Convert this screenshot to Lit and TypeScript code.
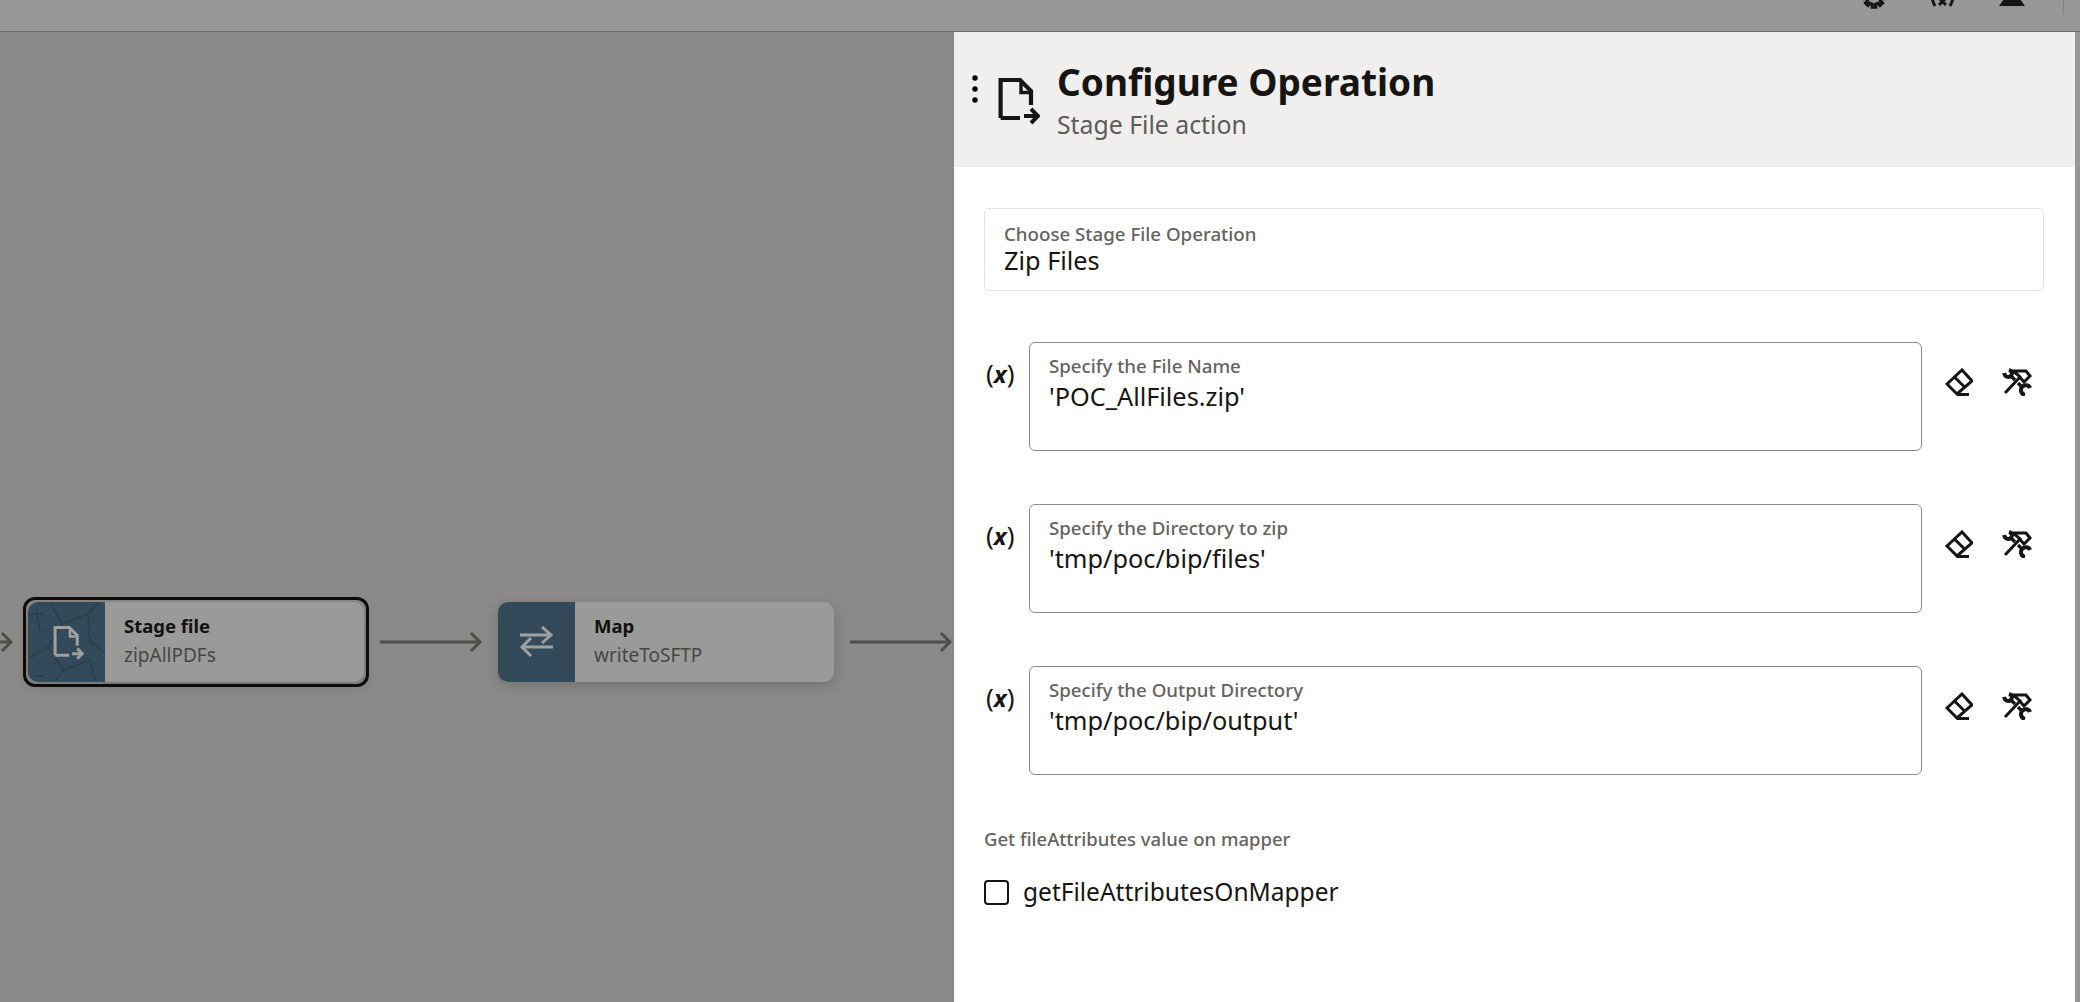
import { LitElement, html, css, svg } from "lit";
import { customElement } from "lit/decorators.js";

const docPaths = svg`<path d="M2.6 40V2H22L33 13V27M2.6 40H22" fill="none" stroke="currentColor" stroke-width="4.2"/><path d="M23 3V14.5H33" fill="none" stroke="currentColor" stroke-width="3.4"/><path d="M26 38H38M33 31L40 38L33 45" fill="none" stroke="currentColor" stroke-width="4"/>`;

const fields = [
  { label: "Specify the File Name", value: "'POC_AllFiles.zip'" },
  { label: "Specify the Directory to zip", value: "'tmp/poc/bip/files'" },
  { label: "Specify the Output Directory", value: "'tmp/poc/bip/output'" },
];

function gearPath(cx: number, cy: number, teeth: number, rOut: number, rIn: number) {
  const step = (Math.PI * 2) / teeth;
  const pts: string[] = [];
  for (let i = 0; i < teeth; i++) {
    const a = i * step + Math.PI / 2;
    const w = step * 0.22;
    const p = (r: number, t: number) => `${(cx + r * Math.cos(t)).toFixed(2)} ${(cy + r * Math.sin(t)).toFixed(2)}`;
    pts.push(p(rOut, a - w), p(rOut, a + w), p(rIn, a + step / 2 - w), p(rIn, a + step / 2 + w));
  }
  return `M${pts.join("L")}Z`;
}

@customElement("app-root")
export class AppRoot extends LitElement {
  static styles = css`
    :host {
      display: block;
      width: 2080px;
      height: 1002px;
      overflow: hidden;
      font-family: "Noto Sans", "Open Sans", sans-serif;
      color: #161513;
      background: #8a8987;
    }
    .page { display: flex; flex-direction: column; height: 1002px; }
    .topbar {
      height: 32px;
      flex: none;
      box-sizing: border-box;
      background: #989795;
      border-bottom: 1px solid #6f6e6b;
      display: flex;
      justify-content: flex-end;
      align-items: flex-start;
      overflow: hidden;
      padding-right: 16px;
    }
    .tb-icons { display: flex; align-items: flex-end; height: 9px; color: #161513; }
    .tb-icon { display: block; flex: none; }
    .gear { margin-right: 45px; }
    .xv { margin: 0 44px 2px 0; }
    .warn { margin: 0 38px 3px 0; }
    .tb-sep { width: 1px; height: 14px; background: #85847f; }
    .main { flex: 1; display: flex; min-height: 0; }
    .canvas {
      width: 954px;
      flex: none;
      display: flex;
      align-items: center;
      background: #8a8987;
      overflow: hidden;
    }
    .flow { display: flex; align-items: center; margin-top: 250px; margin-left: -7px; }
    .arrow { display: block; flex: none; color: #4f4d4a; }
    .arrow-0 { margin-right: 10px; }
    .arrow-1 { margin: 0 16px 0 11px; }
    .arrow-2 { margin-left: 16px; }
    .ring {
      border: 3px solid #0d0c0b;
      border-radius: 12px;
      padding: 2px;
      display: flex;
    }
    .node {
      width: 336px;
      height: 80px;
      display: flex;
      background: #9a9a99;
      border-radius: 10px;
      overflow: hidden;
      box-shadow: 0 4px 12px rgba(0, 0, 0, 0.16);
      flex: none;
    }
    .node-icon {
      position: relative;
      width: 77px;
      flex: none;
      background: #324a59;
      color: #a0a09f;
      display: flex;
      align-items: center;
      justify-content: center;
    }
    .cracks { position: absolute; inset: 0; }
    .node-icon svg.glyph { position: relative; display: block; }
    .doc-glyph { margin: 2px 0 0 3px; }
    .node-text { padding: 9px 0 0 19px; display: flex; flex-direction: column; }
    .node-title { font-size: 18.5px; font-weight: 700; line-height: 29px; color: #111; }
    .node-sub { font-size: 19px; line-height: 30px; color: #474645; }
    .drawer {
      width: 1121px;
      flex: none;
      background: #fff;
      display: flex;
      flex-direction: column;
    }
    .strip { flex: 1; background: #989795; }
    .head {
      height: 135px;
      flex: none;
      background: #f0efed;
      display: flex;
      align-items: flex-start;
      padding: 0 0 0 17px;
    }
    .kebab { margin: 42px 19px 0 0; flex: none; display: block; }
    .head-doc { margin: 46px 17px 0 0; flex: none; display: block; }
    .head-text { display: flex; flex-direction: column; padding-top: 24px; }
    .title { font-size: 37px; font-weight: 700; line-height: 52px; }
    .subtitle { font-size: 24.8px; line-height: 34px; color: #5d5c5a; margin-top: -1px; }
    .body { padding: 41px 31px 0 30px; display: flex; flex-direction: column; }
    .select {
      height: 83px;
      box-sizing: border-box;
      border: 1px solid #e4e3e1;
      border-radius: 5px;
      padding: 13px 19px 0;
      margin-bottom: 51px;
    }
    .select .fvalue { margin-top: -1px; }
    .flabel { font-size: 18.7px; line-height: 24px; color: #646361; font-weight: 500; }
    .fvalue { font-size: 25.3px; line-height: 30px; color: #161513; }
    .row { display: flex; align-items: flex-start; height: 109px; margin-bottom: 53px; }
    .vars { width: 45px; flex: none; padding: 15px 0 0 2px; box-sizing: border-box; font-size: 26px; line-height: 32px; }
    .vars i { font-weight: 700; font-size: 24px; }
    .input {
      width: 893px;
      height: 109px;
      flex: none;
      box-sizing: border-box;
      border: 1px solid #8c8b89;
      border-radius: 6px;
      padding: 11px 19px 0;
    }
    .input .fvalue { margin-top: 3px; }
    .tools { display: flex; align-items: flex-start; padding: 26px 0 0 23px; gap: 29px; }
    .tools svg { display: block; flex: none; }
    .group-label { font-size: 18.5px; line-height: 24px; color: #646361; font-weight: 500; margin-top: -1px; }
    .check { display: flex; align-items: center; margin-top: 25px; }
    .box { width: 25px; height: 25px; box-sizing: border-box; border: 2px solid #161513; border-radius: 4px; flex: none; margin-right: 14px; }
    .check-label { font-size: 24.5px; line-height: 32px; }
  `;

  private arrow(cls: string) {
    return html`<svg class="arrow ${cls}" width="102" height="26" viewBox="0 0 102 26"><path d="M0 13H100M91 4L100 13L91 22" fill="none" stroke="currentColor" stroke-width="3"/></svg>`;
  }

  private row(f: { label: string; value: string }) {
    return html`<div class="row">
      <div class="vars">(<i>x</i>)</div>
      <div class="input">
        <div class="flabel">${f.label}</div>
        <div class="fvalue">${f.value}</div>
      </div>
      <div class="tools">
        <svg width="28" height="28" viewBox="0 0 28 28"><path d="M2 16L17 2L27 13L12 26Z M9 8.5L20 19.5" fill="none" stroke="currentColor" stroke-width="3"/><path d="M12 26.5H24" stroke="currentColor" stroke-width="3"/></svg>
        <svg width="30" height="28" viewBox="0 0 30 28">
          <path d="M3 25L19 8" stroke="currentColor" stroke-width="3" fill="none"/>
          <path d="M11 3H24L28 8L22 14L16 7Z" fill="none" stroke="currentColor" stroke-width="3"/>
          <path d="M2 5C3 9 6 10 9 8M7 2C10 3 11 5 9 8" fill="none" stroke="currentColor" stroke-width="4"/>
          <path d="M9 8L13 12" stroke="currentColor" stroke-width="3.4"/>
          <path d="M16 15L20 19" stroke="currentColor" stroke-width="3.4"/>
          <path d="M28 20C27 17 23 16 20 19M23 27C19 26 18 22 20 19" fill="none" stroke="currentColor" stroke-width="4"/>
        </svg>
      </div>
    </div>`;
  }

  render() {
    return html`<div class="page">
      <div class="topbar">
        <div class="tb-icons">
          <svg class="tb-icon gear" width="22" height="24" viewBox="0 0 22 24"><path d=${gearPath(11, 12, 8, 10.5, 7.5)} fill="none" stroke="currentColor" stroke-width="3"/></svg>
          <svg class="tb-icon xv" width="25" height="24" viewBox="0 0 25 24"><path d="M5 1C1 8 1 16 5 23M20 1C24 8 24 16 20 23" fill="none" stroke="currentColor" stroke-width="3"/><path d="M9 15L16 22M16 15L9 22" stroke="currentColor" stroke-width="3"/></svg>
          <svg class="tb-icon warn" width="26" height="24" viewBox="0 0 26 24"><path d="M13 6L26 24H0Z" fill="currentColor"/></svg>
        </div>
        <div class="tb-sep"></div>
      </div>
      <div class="main">
        <div class="canvas">
          <div class="flow">
            <svg class="arrow arrow-0" width="20" height="26" viewBox="0 0 20 26"><path d="M0 13H18M9 4L18 13L9 22" fill="none" stroke="currentColor" stroke-width="3"/></svg>
            <div class="ring">
              <div class="node">
                <div class="node-icon">
                  <svg class="cracks" width="77" height="80" viewBox="0 0 77 80"><path d="M8 5L12 30M0 12H16M22 0L34 22L20 45L2 56M34 22L60 12L70 0M60 12L62 40L77 50M20 45L36 68L26 80M36 68L62 58L68 80M6 74H16" fill="none" stroke="#2b404e" stroke-width="1.6"/></svg>
                  <svg class="glyph doc-glyph" width="31" height="35" viewBox="0 0 42 48">${docPaths}</svg>
                </div>
                <div class="node-text">
                  <div class="node-title">Stage file</div>
                  <div class="node-sub">zipAllPDFs</div>
                </div>
              </div>
            </div>
            ${this.arrow("arrow-1")}
            <div class="node">
              <div class="node-icon">
                <svg class="glyph" width="34" height="32" viewBox="0 0 34 32"><path d="M0 9H31M22 1L31 9L22 17" fill="none" stroke="currentColor" stroke-width="3"/><path d="M33 21H2M11 12L2 21L11 30" fill="none" stroke="currentColor" stroke-width="3"/></svg>
              </div>
              <div class="node-text">
                <div class="node-title">Map</div>
                <div class="node-sub">writeToSFTP</div>
              </div>
            </div>
            ${this.arrow("arrow-2")}
          </div>
        </div>
        <div class="drawer">
          <div class="head">
            <svg class="kebab" width="8" height="30" viewBox="0 0 8 30"><circle cx="4" cy="4" r="2.7"/><circle cx="4" cy="15" r="2.7"/><circle cx="4" cy="26" r="2.7"/></svg>
            <svg class="head-doc" width="42" height="48" viewBox="0 0 42 48">${docPaths}</svg>
            <div class="head-text">
              <div class="title">Configure Operation</div>
              <div class="subtitle">Stage File action</div>
            </div>
          </div>
          <div class="body">
            <div class="select">
              <div class="flabel">Choose Stage File Operation</div>
              <div class="fvalue">Zip Files</div>
            </div>
            ${fields.map((f) => this.row(f))}
            <div class="group-label">Get fileAttributes value on mapper</div>
            <div class="check">
              <div class="box"></div>
              <div class="check-label">getFileAttributesOnMapper</div>
            </div>
          </div>
        </div>
        <div class="strip"></div>
      </div>
    </div>`;
  }
}
